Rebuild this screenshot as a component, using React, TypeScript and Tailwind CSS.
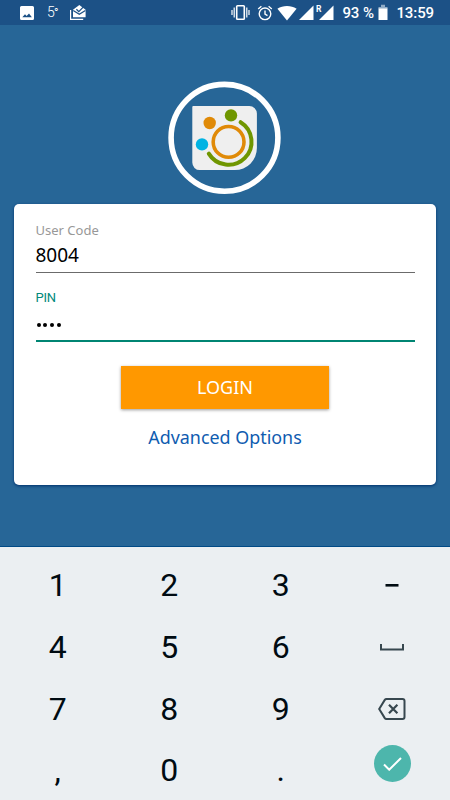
import type { ReactNode } from 'react';

const ink = '#37474f';

function StatusBar() {
  return (
    <header className="flex h-[25px] shrink-0 items-center bg-[#1c5186] pl-5 pr-4 font-[Roboto,sans-serif] text-white">
      <svg className="h-[14px] w-[14px]" viewBox="0 0 14 14">
        <path fill="#fff" fillRule="evenodd" d="M1.5 0h11A1.5 1.5 0 0 1 14 1.5v11a1.5 1.5 0 0 1-1.5 1.5h-11A1.5 1.5 0 0 1 0 12.500v-11A1.5 1.5 0 0 1 1.5 0zM2.3 11.3h9.6L9 7.500l-2.4 2.5L5 8.300z" />
      </svg>
      <span className="ml-[13px] w-[23px] whitespace-nowrap text-[14px] leading-4">
        <span className="inline-block w-[7px] font-light">5</span>
        <span className="text-[12px]">°</span>
      </span>
      <svg className="h-[15px] w-4" viewBox="0 0 16 15" fill="none">
        <path d="M.6 5v9.4h12.6" stroke="#fff" strokeWidth="1.2" />
        <path d="M3 4.8 9.3 0l6.3 4.8v7.5H3z" fill="#fff" />
        <path d="m3.2 5.5 6.1 3.8 6.1-3.8M6.4 4.2l2.4 2.4 4.4-4.5" stroke="#1c5186" strokeWidth="1.3" />
      </svg>

      <div className="ml-auto flex items-center">
        <svg className="h-[17px] w-[19px]" viewBox="0 0 19 17" fill="none" stroke="#fff">
          <rect x="5.7" y="1.7" width="7.6" height="13.6" rx=".8" strokeWidth="1.6" />
          <path d="M3.2 3.5v10M15.8 3.5v10M1 6v5M18 6v5" strokeWidth="1.2" />
        </svg>
        <svg className="ml-[7px] h-4 w-4" viewBox="0 0 16 16" fill="none" stroke="#fff" strokeWidth="1.4">
          <circle cx="8" cy="8.8" r="5.8" />
          <path d="M8 5.5v3.6l2.5 1.5M1.2 4l3.2-2.7M14.8 4l-3.2-2.7" />
        </svg>
        <svg className="ml-1 h-4 w-5" viewBox="0 0 20 16">
          <path fill="#fff" d="M10 15.5.4 3.8C6 0 14 0 19.6 3.800z" />
        </svg>
        <svg className="ml-[2px] h-[15px] w-[15px]" viewBox="0 0 15 15">
          <path fill="#fff" d="M0 15h14.5V.5z" />
        </svg>
        <span className="-mr-[2px] mb-[7px] ml-[2px] text-[8.5px] font-bold leading-none">R</span>
        <svg className="h-[15px] w-[15px]" viewBox="0 0 15 15">
          <path fill="#fff" d="M0 15h14.5V.5z" />
        </svg>
        <span className="ml-2 mt-[2px] w-8 whitespace-nowrap text-[15px] font-medium tracking-[-0.1px]">93 %</span>
        <svg className="ml-1 h-[17px] w-[10px]" viewBox="0 0 10 17">
          <path fill="#8fabc6" d="M3 .8h4V3h2.5v2H.5V3H3z" />
          <path fill="#fff" d="M.5 4.5h9V16h-9z" />
        </svg>
        <span className="ml-2 mt-[2px] text-[15px] font-medium tracking-[-0.1px]">13:59</span>
      </div>
    </header>
  );
}

function Logo() {
  return (
    <svg className="h-[114px] w-[114px]" viewBox="0 0 114 114" fill="none">
      <circle cx="56.5" cy="56.8" r="53.4" stroke="#fff" strokeWidth="5.6" />
      <path d="M25.3 24.9h56a7.6 7.6 0 0 1 7.6 7.6v34.6a22 22 0 0 1-22 22H31.8a7.5 7.5 0 0 1-7.5-7.500V25.900a1 1 0 0 1 1-1z" fill="#efefef" />
      <circle cx="41.7" cy="42" r="6.2" fill="#e08a07" />
      <circle cx="63" cy="34.4" r="6.2" fill="#6f9600" />
      <circle cx="34" cy="63.4" r="6.2" fill="#00b3e3" />
      <circle cx="60.6" cy="60.9" r="15.4" stroke="#e08a07" strokeWidth="3.6" />
      <path d="M72.6 41.2A23 23 0 1 1 40.8 72.6" stroke="#6f9600" strokeWidth="4" strokeLinecap="round" />
    </svg>
  );
}

function LoginCard() {
  return (
    <main className="mx-[14px] mt-[9px] flex h-[281px] flex-col rounded-[5px] bg-white px-[21.5px] pt-[17px] font-['Noto_Sans',sans-serif] shadow-[0_1px_3px_#00306c]">
      <div className="h-[52px] border-b border-[#6b6b6b]">
        <div className="text-[13px] leading-[18px] text-[#989898]">User Code</div>
        <div className="mt-1 text-[19px] leading-6 text-black">8004</div>
      </div>
      <div className="mt-[15px] h-[54px] border-b-2 border-[#008573]">
        <div className="font-[Roboto,sans-serif] text-[13px] leading-[19px] tracking-[-0.2px] text-[#00897b]">PIN</div>
        <div className="mt-2 flex h-5 items-center gap-[2.7px] pl-[1px]">
          {[0, 1, 2, 3].map((i) => (
            <span key={i} className="h-1 w-1 rounded-full bg-black" />
          ))}
        </div>
      </div>
      <button className="mx-auto mt-6 h-[43px] w-[208px] bg-[#ff9800] pb-[1px] text-[18px] text-white shadow-[0_1px_3px_#00000066]">
        LOGIN
      </button>
      <a href="#" className="mx-auto mt-4 text-[17.9px] leading-6 text-[#0f5cb0]">
        Advanced Options
      </a>
    </main>
  );
}

function Keypad() {
  const keys: ReactNode[] = [
    '1', '2', '3',
    <svg key="dash" className="h-[3px] w-[14px]"><path fill="#000b12" d="M.5 0h13v2.6H.5z" /></svg>,
    '4', '5', '6',
    <svg key="space" className="h-[7px] w-6" viewBox="0 0 24 7" fill="none">
      <path d="M1 0v5.5h22V0" stroke={ink} strokeWidth="2" />
    </svg>,
    '7', '8', '9',
    <svg key="back" className="h-[22px] w-7" viewBox="0 0 28 22" fill="none" stroke={ink} strokeWidth="2">
      <path d="M8.5 1h16a2 2 0 0 1 2 2v16a2 2 0 0 1-2 2h-16a2 2 0 0 1-1.7-.9L1.2 11l5.6-9.1A2 2 0 0 1 8.5 1z" />
      <path d="m11 6.8 8.4 8.4M19.4 6.8 11 15.2" strokeWidth="2.2" />
    </svg>,
    ',', '0', '.',
    <span key="done" className="mb-[13px] flex h-[37px] w-[37px] items-center justify-center rounded-full bg-[#4db6ac]">
      <svg className="h-[14px] w-[19px]" viewBox="0 0 19 14" fill="none">
        <path d="m1 7.5 5.2 5.2L18 1" stroke="#fff" strokeWidth="2" />
      </svg>
    </span>,
  ];

  return (
    <section className="grid h-[254px] shrink-0 auto-rows-[61.7px] grid-cols-[repeat(4,111.5px)] border-t border-[#004a86] bg-[#ebeff2] pl-[2px] pt-[7.5px] font-[Roboto,sans-serif] text-[32px] text-[#000b12]">
      {keys.map((key, i) => (
        <div key={i} className="flex items-center justify-center">{key}</div>
      ))}
    </section>
  );
}

export default function App() {
  return (
    <div className="flex h-[800px] w-[450px] flex-col overflow-hidden bg-[#276697]">
      <StatusBar />
      <div className="flex-1">
        <div className="flex justify-center pt-14">
          <Logo />
        </div>
        <LoginCard />
      </div>
      <Keypad />
    </div>
  );
}
